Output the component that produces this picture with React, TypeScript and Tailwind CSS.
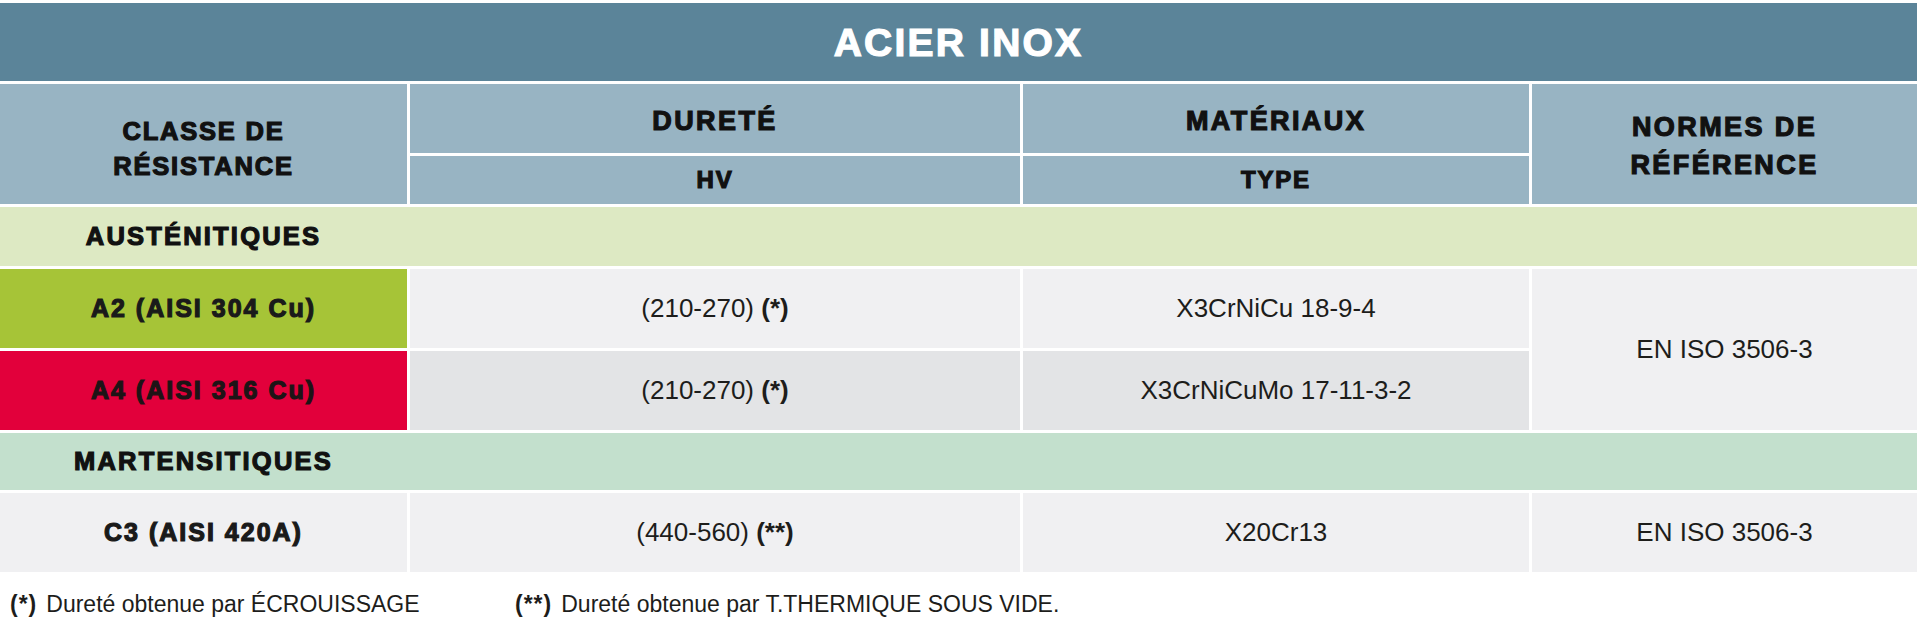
const heavy = "font-['Liberation_Sans',Arial,sans-serif] font-bold [-webkit-text-stroke:1.2px_currentColor] [paint-order:stroke_fill]"
const body = "font-['Liberation_Sans',Arial,sans-serif] text-[26px] text-[#1d1d1b]"

function Band({ label, color }: { label: string; color: string }) {
  return (
    <div className={`col-span-4 flex items-center ${color}`}>
      <div className={`w-[407px] text-center text-[25.5px] tracking-[2.2px] text-[#111] ${heavy}`}>{label}</div>
    </div>
  )
}

export default function App() {
  return (
    <div className="w-[1920px] h-[638px] bg-white pt-[3px]">
      <div className="grid w-[1917px] grid-cols-[407px_610px_506px_385px] grid-rows-[78px_69px_48px_59px_79px_79px_57px_79px] gap-[3px]">
        {/* title */}
        <div className="col-span-4 flex items-center justify-center bg-[#5b8499]">
          <span className={`text-[39px] tracking-[2.2px] text-white pt-[2px] ${heavy}`}>ACIER INOX</span>
        </div>

        {/* header */}
        <div className="row-span-2 flex items-center justify-center bg-[#98b4c3] pt-[10px]">
          <div className={`text-center text-[25.5px] leading-[35px] tracking-[1.8px] text-[#111] ${heavy}`}>
            CLASSE DE<br />RÉSISTANCE
          </div>
        </div>
        <div className="flex items-center justify-center bg-[#98b4c3] pt-[6px]">
          <span className={`text-[27px] tracking-[2.4px] text-[#111] ${heavy}`}>DURETÉ</span>
        </div>
        <div className="flex items-center justify-center bg-[#98b4c3] pt-[6px]">
          <span className={`text-[27px] tracking-[2.4px] text-[#111] ${heavy}`}>MATÉRIAUX</span>
        </div>
        <div className="row-span-2 flex items-center justify-center bg-[#98b4c3] pt-[4px]">
          <div className={`text-center text-[27px] leading-[38px] tracking-[2.4px] text-[#111] ${heavy}`}>
            NORMES DE<br />RÉFÉRENCE
          </div>
        </div>
        <div className="flex items-center justify-center bg-[#98b4c3]">
          <span className={`text-[24px] tracking-[1.8px] text-[#111] ${heavy}`}>HV</span>
        </div>
        <div className="flex items-center justify-center bg-[#98b4c3]">
          <span className={`text-[24px] tracking-[1.8px] text-[#111] ${heavy}`}>TYPE</span>
        </div>

        <Band label="AUSTÉNITIQUES" color="bg-[#dde9c3]" />

        {/* A2 */}
        <div className="flex items-center justify-center bg-[#a6c437]">
          <span className={`text-[25px] tracking-[2px] text-[#1a1a1a] ${heavy}`}>A2 (AISI 304 Cu)</span>
        </div>
        <div className={`flex items-center justify-center bg-[#f0f0f2] ${body}`}>
          <span>(210-270) <b className="font-bold">(*)</b></span>
        </div>
        <div className={`flex items-center justify-center bg-[#f0f0f2] ${body}`}>X3CrNiCu 18-9-4</div>
        <div className={`row-span-2 flex items-center justify-center bg-[#f0f0f2] ${body}`}>EN ISO 3506-3</div>

        {/* A4 */}
        <div className="flex items-center justify-center bg-[#e2003b]">
          <span className={`text-[25px] tracking-[2px] text-[#1d1416] ${heavy}`}>A4 (AISI 316 Cu)</span>
        </div>
        <div className={`flex items-center justify-center bg-[#e3e4e6] ${body}`}>
          <span>(210-270) <b className="font-bold">(*)</b></span>
        </div>
        <div className={`flex items-center justify-center bg-[#e3e4e6] ${body}`}>X3CrNiCuMo 17-11-3-2</div>

        <Band label="MARTENSITIQUES" color="bg-[#c3e0cd]" />

        {/* C3 */}
        <div className="flex items-center justify-center bg-[#f0f0f2]">
          <span className={`text-[25px] tracking-[2px] text-[#1a1a1a] ${heavy}`}>C3 (AISI 420A)</span>
        </div>
        <div className={`flex items-center justify-center bg-[#f0f0f2] ${body}`}>
          <span>(440-560) <b className="font-bold">(**)</b></span>
        </div>
        <div className={`flex items-center justify-center bg-[#f0f0f2] ${body}`}>X20Cr13</div>
        <div className={`flex items-center justify-center bg-[#f0f0f2] ${body}`}>EN ISO 3506-3</div>
      </div>

      {/* footnotes */}
      <div className="mt-[19px] flex pl-[10px] font-['Liberation_Sans',Arial,sans-serif] text-[23px] leading-[26px] text-[#1d1d1b]">
        <div className="w-[505px]">
          <b className="font-bold tracking-[1px]">(*)</b>
          <span className="ml-[9px]">Dureté obtenue par ÉCROUISSAGE</span>
        </div>
        <div>
          <b className="font-bold tracking-[1px]">(**)</b>
          <span className="ml-[9px]">Dureté obtenue par T.THERMIQUE SOUS VIDE.</span>
        </div>
      </div>
    </div>
  )
}
